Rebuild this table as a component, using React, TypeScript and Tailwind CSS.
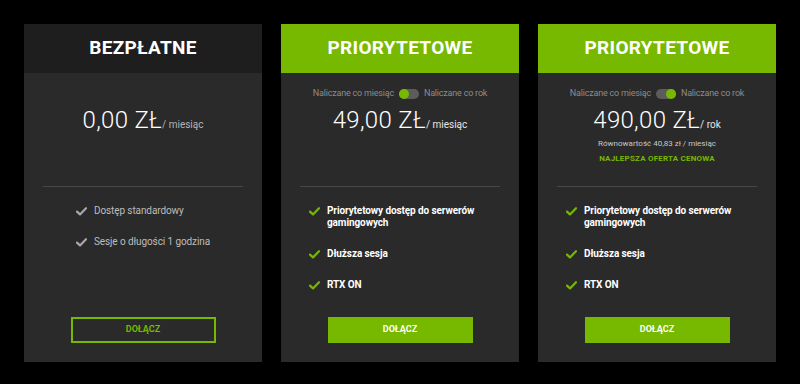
import React from 'react'

type Plan = {
  title: string
  highlighted: boolean
  price: string
  period: string
  toggle?: 'month' | 'year'
  equivalent?: string
  bestOffer?: boolean
  features: string[]
}

const plans: Plan[] = [
  {
    title: 'BEZPŁATNE',
    highlighted: false,
    price: '0,00 ZŁ',
    period: '/ miesiąc',
    features: ['Dostęp standardowy', 'Sesje o długości 1 godzina'],
  },
  {
    title: 'PRIORYTETOWE',
    highlighted: true,
    price: '49,00 ZŁ',
    period: '/ miesiąc',
    toggle: 'month',
    features: ['Priorytetowy dostęp do serwerów gamingowych', 'Dłuższa sesja', 'RTX ON'],
  },
  {
    title: 'PRIORYTETOWE',
    highlighted: true,
    price: '490,00 ZŁ',
    period: '/ rok',
    toggle: 'year',
    equivalent: 'Równowartość 40,83 zł / miesiąc',
    bestOffer: true,
    features: ['Priorytetowy dostęp do serwerów gamingowych', 'Dłuższa sesja', 'RTX ON'],
  },
]

function CheckIcon({ green }: { green: boolean }) {
  return (
    <svg width="11" height="9" viewBox="0 0 11 9" className="shrink-0 mt-[2px]">
      <path
        d="M1 4.6 L4 7.4 L10 1.2"
        fill="none"
        stroke={green ? '#76b900' : '#a8a8a8'}
        strokeWidth="2.2"
        strokeLinecap="round"
        strokeLinejoin="round"
      />
    </svg>
  )
}

function Toggle({ value }: { value: 'month' | 'year' }) {
  return (
    <div className="flex items-center gap-[5px] h-[14px] text-[9px] text-[#8c8c8c] tracking-[-0.2px]">
      <span>Naliczane co miesiąc</span>
      <div className={`relative w-[20px] h-[10px] rounded-full bg-[#5c5c5c] flex items-center ${value === 'year' ? 'justify-end' : 'justify-start'}`}>
        <div className="w-[10px] h-[10px] rounded-full bg-[#76b900]" />
      </div>
      <span>Naliczane co rok</span>
    </div>
  )
}

function PlanCard({ plan }: { plan: Plan }) {
  const { title, highlighted, price, period, toggle, equivalent, bestOffer, features } = plan
  return (
    <div className="flex-1 flex flex-col bg-[#2a2a2a]">
      <div
        className={`h-[49px] flex items-center justify-center text-[19px] font-bold text-white tracking-[0.3px] ${
          highlighted ? 'bg-[#76b900]' : 'bg-[#1e1e1e]'
        }`}
      >
        {title}
      </div>

      <div className="h-[113px] flex flex-col items-center pt-[14px]">
        {toggle ? <Toggle value={toggle} /> : <div className="h-[14px]" />}
        <div className="flex items-baseline mt-[7px] text-white">
          <span className="text-[24px] font-light leading-none tracking-[0.3px]">{price}</span>
          <span className={`text-[10px] ${highlighted ? 'text-[#e6e6e6]' : 'text-[#b4b4b4]'}`}>{period}</span>
        </div>
        {equivalent && <p className="mt-[6px] text-[8px] leading-[12px] text-[#c8c8c8]">{equivalent}</p>}
        {bestOffer && (
          <p className="mt-[3px] text-[8px] leading-[12px] font-bold text-[#76b900] tracking-[0.2px]">NAJLEPSZA OFERTA CENOWA</p>
        )}
      </div>

      <div className="mx-[19px] border-t border-[#474747]" />

      <div className="flex-1 pt-[18px]">
        <ul className={`flex flex-col gap-[19px] ${highlighted ? 'px-[28px]' : 'w-fit mx-auto'}`}>
          {features.map((f) => (
            <li key={f} className="flex items-start gap-[7px]">
              <CheckIcon green={highlighted} />
              <span
                className={`text-[10px] leading-[12px] tracking-[-0.1px] ${
                  highlighted ? 'font-bold text-white' : 'text-[#bdbdbd]'
                }`}
              >
                {f}
              </span>
            </li>
          ))}
        </ul>
      </div>

      <div className="flex justify-center mb-[19px]">
        {highlighted ? (
          <button className="w-[145px] h-[26px] bg-[#76b900] text-white text-[9px] font-bold">DOŁĄCZ</button>
        ) : (
          <button className="w-[145px] h-[26px] border-2 border-[#76b900] text-[#76b900] text-[9px] font-bold">DOŁĄCZ</button>
        )}
      </div>
    </div>
  )
}

export default function App() {
  return (
    <div className="w-[800px] h-[384px] bg-black flex gap-[19px] px-6 pt-6 pb-[22px] font-['Roboto',sans-serif]">
      {plans.map((p, i) => (
        <PlanCard key={i} plan={p} />
      ))}
    </div>
  )
}
